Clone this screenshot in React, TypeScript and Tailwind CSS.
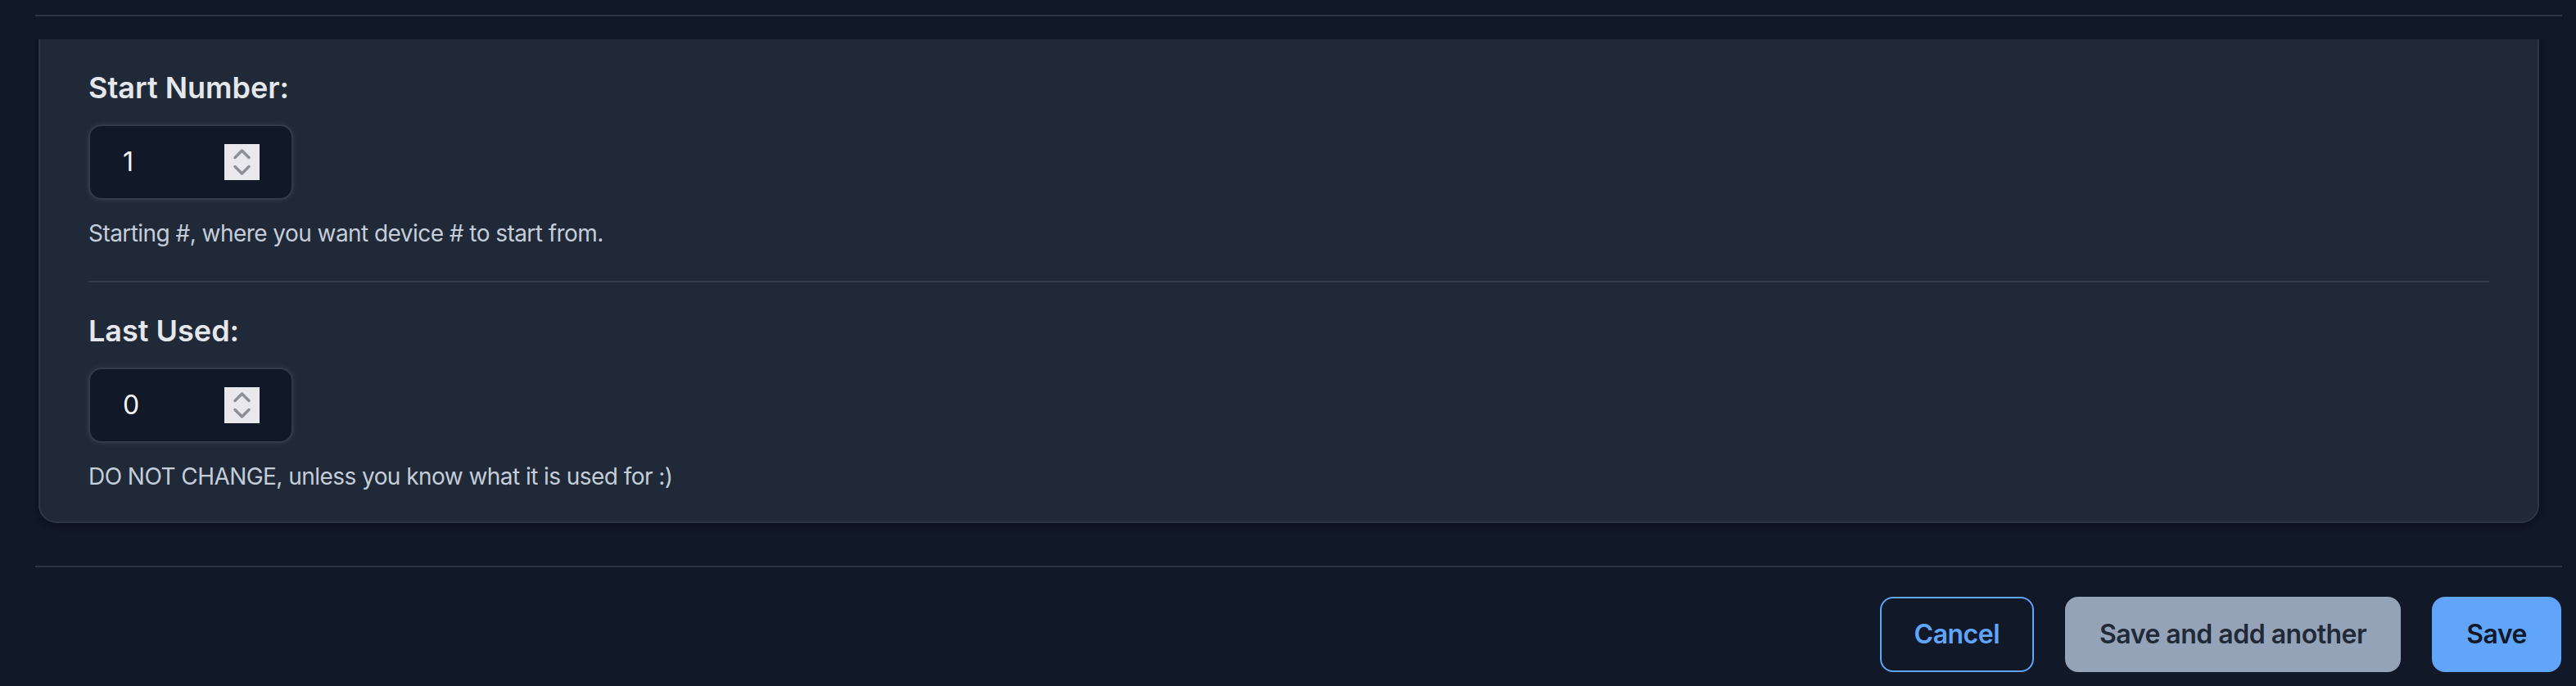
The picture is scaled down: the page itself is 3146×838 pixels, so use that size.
import React from "react";

type FieldProps = {
  label: string;
  value: string;
  help: string;
};

const Spinner = () => (
  <svg width="43" height="44" viewBox="0 0 43 44" className="shrink-0 bg-[#e8e8ed]">
    <path d="M13 16.5 L21.5 8 L30 16.5" fill="none" stroke="#8e8e96" strokeWidth="3.5" strokeLinecap="round" strokeLinejoin="round" />
    <path d="M13 27.5 L21.5 36 L30 27.5" fill="none" stroke="#8e8e96" strokeWidth="3.5" strokeLinecap="round" strokeLinejoin="round" />
  </svg>
);

const NumberField = ({ label, value, help }: FieldProps) => (
  <div>
    <label className="block text-[36px] leading-[56px] font-semibold text-[#e5e7eb]">
      {label}
    </label>
    <div className="mt-[17px] flex h-[92px] w-[250px] items-center justify-between rounded-[16px] border-2 border-[#323b4b] bg-[#111827] pl-[40px] pr-[39px] shadow-[0_0_6px_rgba(148,163,184,0.18)]">
      <span className="text-[32px] text-[#f3f4f6]">{value}</span>
      <Spinner />
    </div>
    <p className="mt-[21px] text-[28px] leading-[40px] text-[#c5cdd9] tracking-[-0.55px]">{help}</p>
  </div>
);

export default function App() {
  return (
    <div className="min-h-screen bg-[#111827] font-['Inter',sans-serif]">
      <div className="pt-[18px] pl-[43px] pr-[17px]">
        <div className="h-[2px] bg-[#2c3546]" />

        <div className="mt-[28px] overflow-hidden pl-[4px] pr-[28px] pb-[14px]">
          <div className="-mt-[20px] rounded-[22px] border-2 border-[#2e3748] bg-[#1f2937] px-[59px] pt-[49px] pb-[35px] shadow-[0_2px_8px_rgba(0,0,0,0.45)]">
            <NumberField
              label="Start Number:"
              value="1"
              help="Starting #, where you want device # to start from."
            />
            <div className="mt-[38px] h-[2px] bg-[#343d4d]" />
            <div className="mt-[31px]">
              <NumberField
                label="Last Used:"
                value="0"
                help="DO NOT CHANGE, unless you know what it is used for :)"
              />
            </div>
          </div>
        </div>

        <div className="mt-[38px] h-[2px] bg-[#2c3546]" />

        <div className="mt-[36px] flex justify-end gap-[38px] pr-[1px]">
          <button className="rounded-[16px] border-2 border-[#60a5fa] bg-transparent px-[40px] py-[20px] text-[32px] leading-[48px] font-semibold text-[#60a5fa] tracking-[-0.5px]">
            Cancel
          </button>
          <button className="rounded-[16px] border-2 border-[#94a3b8] bg-[#94a3b8] px-[40px] py-[20px] text-[32px] leading-[48px] font-semibold text-[#1f2937] tracking-[-0.5px]">
            Save and add another
          </button>
          <button className="rounded-[16px] border-2 border-[#60a5fa] bg-[#60a5fa] px-[40px] py-[20px] text-[32px] leading-[48px] font-semibold text-[#111827] tracking-[-0.5px]">
            Save
          </button>
        </div>
      </div>
    </div>
  );
}
